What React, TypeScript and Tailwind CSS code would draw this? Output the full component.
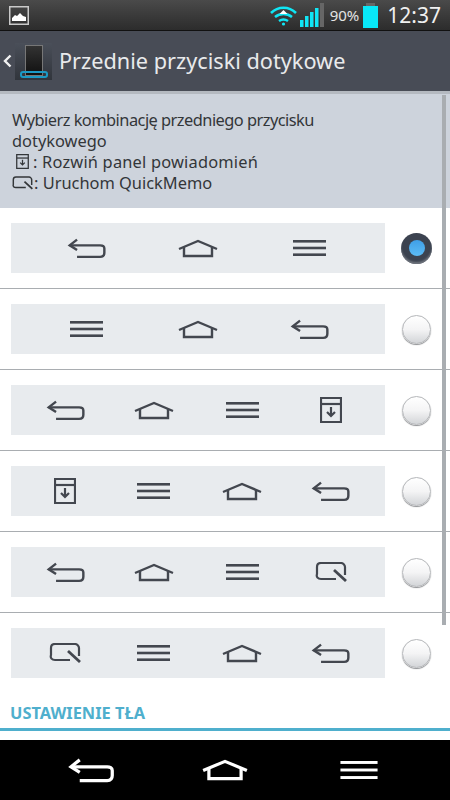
const FONT = "font-['Noto_Sans','Open_Sans',sans-serif]";

type IconName = 'back' | 'home' | 'menu' | 'panel' | 'memo';

function BackIcon({ className, weight = 2.3 }: { className?: string; weight?: number }) {
  return (
    <svg viewBox="0 0 38 20" fill="none" stroke="currentColor" strokeWidth={weight} className={className}>
      <path d="M10 1.5 3 7l7 4.5" />
      <path d="M3 7h29c2 0 4 1 4 3v4c0 3-2 4-4 4H10" />
    </svg>
  );
}

function HomeIcon({ className, weight = 2.4 }: { className?: string; weight?: number }) {
  return (
    <svg viewBox="0 0 40 19" fill="none" stroke="currentColor" strokeWidth={weight} className={className}>
      <path d="M1 10 20 2l19 8" />
      <path d="M6 8v9h28V8" />
    </svg>
  );
}

function MenuIcon({ className }: { className?: string }) {
  return (
    <svg viewBox="0 0 33 16" fill="currentColor" className={className}>
      <rect x="0" y="0" width="33" height="2.6" />
      <rect x="0" y="6.7" width="33" height="2.6" />
      <rect x="0" y="13.4" width="33" height="2.6" />
    </svg>
  );
}

function PanelIcon({ className }: { className?: string }) {
  return (
    <svg viewBox="0 0 22 26" fill="none" stroke="currentColor" strokeWidth="2.2" className={className}>
      <path d="M1 1h20v24H1z" />
      <path d="M1 7h20" />
      <path d="M11 10v9M7 15l4 4 4-4" />
    </svg>
  );
}

function MemoIcon({ className }: { className?: string }) {
  return (
    <svg viewBox="0 0 32 20" fill="none" stroke="currentColor" strokeWidth="2.2" className={className}>
      <path d="M21 17H6c-3 0-5-2-4-5V5c0-2 1-4 4-4h20c2 0 4 2 4 4v8" />
      <path d="m19 8 12 11" strokeWidth="2.8" />
    </svg>
  );
}

function KeyIcon({ name }: { name: IconName }) {
  if (name === 'back') return <BackIcon className="h-[21px] w-[41px]" />;
  if (name === 'home') return <HomeIcon className="h-[19px] w-[40px]" />;
  if (name === 'menu') return <MenuIcon className="h-[16px] w-[33px]" />;
  if (name === 'panel') return <PanelIcon className="h-[26px] w-[22px]" />;
  return <MemoIcon className="h-[20px] w-[32px]" />;
}

function KeyRow({ icons, selected }: { icons: IconName[]; selected?: boolean }) {
  return (
    <div className="flex h-[81px] items-center border-b border-[#a9adb1] pl-[11px] last:border-b-transparent">
      <div
        className={`grid h-[50px] w-[374px] items-center justify-items-center bg-[#e8ebee] text-[#43474f] ${
          icons.length === 3 ? 'grid-cols-3 px-[20px]' : 'grid-cols-4 px-[10px]'
        }`}
      >
        {icons.map((icon, i) => (
          <KeyIcon key={i} name={icon} />
        ))}
      </div>
      {selected ? (
        <div className="ml-[16px] flex h-[31px] w-[31px] items-center justify-center rounded-full bg-[#3c4350] shadow-[inset_0_-2px_2px_#70757e]">
          <div className="h-[16px] w-[16px] rounded-full bg-gradient-to-b from-[#3f9fe8] to-[#5cbcf5]" />
        </div>
      ) : (
        <div className="ml-[17px] h-[29px] w-[29px] rounded-full border border-[#b5b7ba] bg-gradient-to-b from-white via-[#f4f4f5] to-[#d3d5d8] shadow-[0_1px_1px_#8d8f92]" />
      )}
    </div>
  );
}

export default function App() {
  return (
    <div className={`relative flex h-[800px] w-[450px] flex-col overflow-hidden bg-white ${FONT}`}>
      {/* status bar */}
      <div className="flex h-[31px] items-center border-b border-[#111] bg-gradient-to-b from-[#4a4a4a] to-[#2c2c2c] pl-[9px] pr-[9px]">
        <svg viewBox="0 0 20 19" className="h-[19px] w-[20px]">
          <rect x="0.75" y="0.75" width="18.5" height="17.5" fill="none" stroke="#c9c9c9" strokeWidth="1.5" />
          <path d="M3 15v-3l3-3 2 1 3-3 3 3 3 1v4z" fill="#fff" />
        </svg>
        <div className="ml-auto flex items-center">
          <svg viewBox="0 0 27 22" className="h-[22px] w-[27px]" fill="none" stroke="#10e6f5" strokeWidth="2.6">
            <path d="M1 9c7-7 18-7 25 0" />
            <path d="M5 13c5-4 12-4 17 0" />
            <path d="M9 17c3-2 6-2 9 0" />
            <circle cx="13.5" cy="20" r="1.6" fill="#10e6f5" stroke="none" />
            <path d="M13.5 6l4 4h-8z" fill="#fff" stroke="none" />
          </svg>
          <svg viewBox="0 0 25 24" className="ml-[3px] h-[24px] w-[25px]">
            <rect x="0" y="17" width="3.5" height="7" fill="#10e6f5" />
            <rect x="5" y="13" width="3.5" height="11" fill="#10e6f5" />
            <rect x="10" y="9" width="3.5" height="15" fill="#10e6f5" />
            <rect x="15" y="5" width="3.5" height="19" fill="#10e6f5" />
            <rect x="20" y="0" width="4" height="24" fill="#666" />
          </svg>
          <span className="ml-[5px] text-[15px] leading-none text-[#e4e4e4]">90%</span>
          <div className="ml-[4px] flex flex-col items-center">
            <div className="h-[3px] w-[9px] bg-[#666]" />
            <div className="h-[22px] w-[15px] bg-[#08e8f8]" />
          </div>
          <span className="ml-[9px] text-[21px] leading-none text-[#f0f0f0]">12:37</span>
        </div>
      </div>

      {/* action bar */}
      <div className="flex h-[60px] items-center bg-[#484c56] pl-[3px]">
        <svg viewBox="0 0 9 14" className="h-[14px] w-[9px]" fill="none" stroke="#f2f2f2" strokeWidth="2.4">
          <path d="M7.5 1.5 2 7l5.5 5.5" />
        </svg>
        <div className="ml-[3px] flex h-[37px] w-[37px] items-start justify-center bg-gradient-to-b from-[#4a4f59] to-[#31353c]">
          <div className="relative mt-[2px] h-[31px] w-[18px] border border-[#777] bg-gradient-to-b from-[#333] to-[#111]">
            <div className="absolute -left-[6px] bottom-[-3px] h-[7px] w-[28px] rounded-[3px] border-2 border-[#1b9ac6]" />
          </div>
        </div>
        <h1 className="ml-[7px] text-[21.7px] font-normal leading-none text-[#e9eaec]">Przednie przyciski dotykowe</h1>
      </div>

      {/* description */}
      <div className="border-t-[3px] border-[#b4b9c0] bg-[#cdd3dc] px-[12px] pb-[15px] pt-[15px] text-[16.4px] leading-[21px] text-[#333639]">
        <p className="tracking-[-0.53px]">Wybierz kombinację przedniego przycisku</p>
        <p>dotykowego</p>
        <p className="flex items-center">
          <PanelIcon className="ml-[4px] h-[15px] w-[13px]" />
          <span className="ml-[4px] tracking-[0.2px]">: Rozwiń panel powiadomień</span>
        </p>
        <p className="flex items-center">
          <MemoIcon className="h-[14px] w-[21px]" />
          <span className="ml-[1px]">: Uruchom QuickMemo</span>
        </p>
      </div>

      {/* key combinations */}
      <div>
        <KeyRow icons={['back', 'home', 'menu']} selected />
        <KeyRow icons={['menu', 'home', 'back']} />
        <KeyRow icons={['back', 'home', 'menu', 'panel']} />
        <KeyRow icons={['panel', 'menu', 'home', 'back']} />
        <KeyRow icons={['back', 'home', 'menu', 'memo']} />
        <KeyRow icons={['memo', 'menu', 'home', 'back']} />
      </div>

      <div className="mt-auto">
        <div className="h-[37px] border-b-[3px] border-[#4fafcd] pl-[10px] pt-[6px] text-[16.4px] font-bold leading-[26px] text-[#4fafcd]">
          USTAWIENIE TŁA
        </div>
        <div className="h-[9px] bg-white" />
        <div className="grid h-[60px] grid-cols-3 items-center justify-items-center bg-black px-[24px] text-white">
          <BackIcon className="h-[25px] w-[48px]" weight={2.6} />
          <HomeIcon className="h-[22px] w-[46px]" weight={2.8} />
          <MenuIcon className="h-[18px] w-[40px]" />
        </div>
      </div>

      {/* scrollbar */}
      <div className="absolute left-[442px] top-[95px] h-[530px] w-[4px] bg-[#a9adb1]" />
    </div>
  );
}
